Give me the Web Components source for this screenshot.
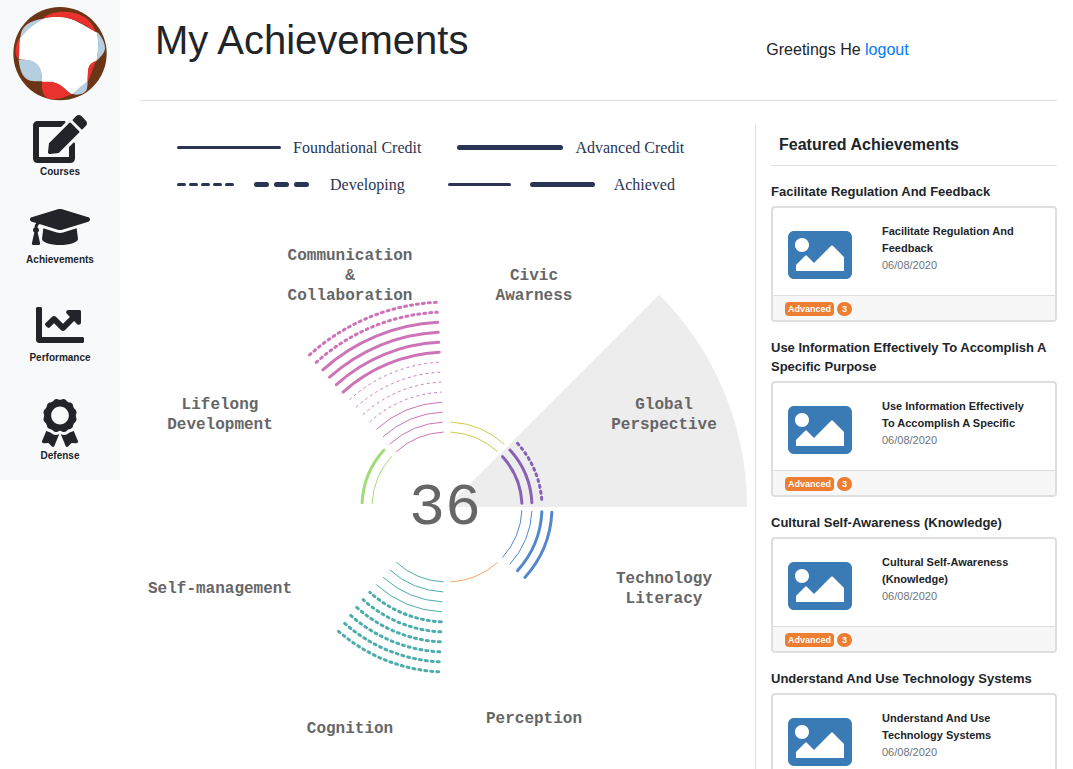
<!DOCTYPE html>
<html lang="en">
<head>
<meta charset="utf-8">
<title>My Achievements</title>
<style>
  body { margin: 0; background: #fff; color: #212529; font: 16px/24px "Liberation Sans", Arial, sans-serif; }
</style>
</head>
<body>
<achievements-app></achievements-app>

<script>
const ICONS = {
  edit: ['0 0 576 512', 'M402.6 83.2l90.2 90.2c3.8 3.8 3.8 10 0 13.8L274.4 405.6l-92.8 10.3c-12.4 1.4-22.9-9.1-21.5-21.5l10.3-92.8L388.8 83.2c3.8-3.8 10-3.8 13.8 0zm162-22.9l-48.8-48.8c-15.2-15.2-39.9-15.2-55.2 0l-35.4 35.4c-3.8 3.8-3.8 10 0 13.8l90.2 90.2c3.8 3.8 10 3.8 13.8 0l35.4-35.4c15.2-15.3 15.2-40 0-55.2zM384 346.2V448H64V128h229.8c3.2 0 6.2-1.3 8.5-3.5l40-40c7.6-7.6 2.2-20.5-8.5-20.5H48C21.5 64 0 85.5 0 112v352c0 26.5 21.5 48 48 48h352c26.5 0 48-21.5 48-48V306.2c0-10.7-12.9-16-20.5-8.5l-40 40c-2.2 2.3-3.5 5.3-3.5 8.5z'],
  cap: ['0 0 640 512', 'M622.34 153.2L343.4 67.5c-15.2-4.67-31.6-4.67-46.79 0L17.66 153.2c-23.54 7.23-23.54 38.36 0 45.59l48.63 14.94c-10.67 13.19-17.23 29.28-17.88 46.9C38.78 266.15 32 276.11 32 288c0 10.78 5.68 19.85 13.86 25.65L20.33 428.53C18.11 438.52 25.71 448 35.94 448h56.11c10.24 0 17.84-9.48 15.62-19.47L82.14 313.65C90.32 307.85 96 298.78 96 288c0-11.57-6.47-21.25-15.66-26.87.76-15.02 8.44-28.3 20.69-36.72L296.6 284.5c9.06 2.78 26.44 6.25 46.79 0l278.95-85.7c23.55-7.24 23.55-38.36 0-45.6zM352.79 315.09c-28.53 8.76-52.84 3.92-65.59 0l-145.02-44.55L128 384c0 35.35 85.96 64 192 64s192-28.65 192-64l-14.18-113.47-145.03 44.56z'],
  chart: ['0 0 512 512', 'M496 384H64V80c0-8.84-7.16-16-16-16H16C7.16 64 0 71.16 0 80v336c0 17.67 14.33 32 32 32h464c8.84 0 16-7.16 16-16v-32c0-8.84-7.16-16-16-16zM464 96H345.94c-21.38 0-32.09 25.85-16.97 40.97l32.4 32.4L288 242.75l-73.37-73.37c-12.5-12.5-32.76-12.5-45.25 0l-68.69 68.69c-6.25 6.25-6.25 16.38 0 22.63l22.62 22.62c6.25 6.25 16.38 6.25 22.63 0L192 237.25l73.37 73.37c12.5 12.5 32.76 12.5 45.25 0l96-96 32.4 32.4c15.12 15.12 40.97 4.41 40.97-16.97V112c.01-8.84-7.15-16-15.99-16z'],
  award: ['0 0 384 512', 'M97.12 362.63c-8.69-8.69-4.16-6.24-25.12-11.85-9.51-2.55-17.87-7.45-25.43-13.32L1.2 448.7c-4.39 10.77 3.81 22.47 15.43 22.03l52.69-2.01L105.56 507c8 8.44 22.04 5.81 26.43-4.96l52.05-127.62c-10.84 6.04-22.87 9.58-35.31 9.58-19.5 0-37.82-7.59-51.61-21.37zM382.8 448.7l-45.37-111.24c-7.56 5.88-15.92 10.77-25.43 13.32-21.07 5.64-16.45 3.18-25.12 11.85-13.79 13.78-32.12 21.37-51.62 21.37-12.44 0-24.47-3.55-35.31-9.58L252 502.04c4.39 10.77 18.44 13.4 26.43 4.96l36.25-38.28 52.69 2.01c11.62.44 19.82-11.27 15.43-22.03zM263 340c15.28-15.55 17.03-14.21 38.79-20.14 13.89-3.79 24.75-14.84 28.47-28.98 7.48-28.4 5.54-24.97 25.95-45.75 10.17-10.35 14.14-25.44 10.42-39.58-7.47-28.38-7.48-24.42 0-52.83 3.72-14.14-.25-29.23-10.42-39.58-20.41-20.78-18.47-17.36-25.95-45.75-3.72-14.14-14.58-25.19-28.47-28.98-27.88-7.61-24.52-5.62-44.95-26.41-10.17-10.35-25-14.4-38.89-10.61-27.87 7.6-23.98 7.61-51.9 0-13.89-3.79-28.72.25-38.89 10.61-20.41 20.78-17.05 18.8-44.94 26.41-13.89 3.79-24.75 14.84-28.47 28.98-7.47 28.39-5.54 24.97-25.95 45.75-10.17 10.35-14.15 25.44-10.42 39.58 7.47 28.36 7.48 24.4 0 52.82-3.72 14.14.25 29.23 10.42 39.59 20.41 20.78 18.47 17.35 25.95 45.75 3.72 14.14 14.58 25.19 28.47 28.98C104.6 325.96 106.27 325 121 340c13.23 13.47 33.84 15.88 49.74 5.82a39.676 39.676 0 0 1 42.53 0c15.89 10.06 36.5 7.65 49.73-5.82zM97.66 175.96c0-53.03 42.24-96.02 94.34-96.02s94.34 42.99 94.34 96.02-42.24 96.02-94.34 96.02-94.34-42.99-94.34-96.02z'],
  image: ['0 0 512 512', 'M464 448H48c-26.51 0-48-21.49-48-48V112c0-26.51 21.49-48 48-48h416c26.51 0 48 21.49 48 48v288c0 26.51-21.49 48-48 48zM112 120c-30.928 0-56 25.072-56 56s25.072 56 56 56 56-25.072 56-56-25.072-56-56-56zM64 384h384V272l-87.515-87.515c-4.686-4.686-12.284-4.686-16.971 0L208 320l-55.515-55.515c-4.686-4.686-12.284-4.686-16.971 0L64 336v48z']
};
const icon = name => `<svg viewBox="${ICONS[name][0]}" fill="currentColor" aria-hidden="true"><path d="${ICONS[name][1]}"/></svg>`;

function define(name, render) {
  customElements.define(name, class extends HTMLElement {
    connectedCallback() {
      if (this.shadowRoot) return;
      this.attachShadow({ mode: 'open' }).innerHTML = render(this);
    }
  });
}

define('site-logo', () => `
  <style>:host { display: block; width: 94px; height: 94px; } svg { display: block; width: 100%; height: 100%; }</style>
  <svg viewBox="39 21 282 282" role="img" aria-label="Logo">
    <circle cx="180" cy="161" r="140" fill="#6b3615"/>
    <path fill="#fff" d="M125 58C150 48 190 48 215 58C245 70 275 90 292 98C294 110 295 130 294 155L290 182C275 190 268 192 266 205C262 220 266 235 262 245C255 260 228 272 218 282L213 282C195 270 180 248 150 246L126 245C126 215 120 190 90 182C75 178 65 180 56 178C58 150 55 120 62 110C75 90 100 75 125 58Z"/>
    <path fill="#b5cee0" d="M62 106C66 75 90 62 130 56C110 66 85 85 62 113Z"/>
    <path fill="#e9312d" d="M130 54C150 35 200 30 235 42C262 52 280 72 288 97C265 82 225 52 180 51C160 50 145 51 130 54Z"/>
    <path fill="#b5cee0" d="M292 96C305 110 316 130 315 147C312 162 300 172 290 182C294 150 296 125 292 96Z"/>
    <path fill="#e9312d" d="M61 111C50 125 45 145 47 160C48 170 54 177 56 177C60 150 56 125 61 111Z"/>
    <path fill="#b5cee0" d="M56 180C60 215 70 243 103 244L126 244C127 210 118 190 95 182C80 178 68 180 56 180Z"/>
    <path fill="#e9312d" d="M126 246C124 270 130 297 155 298C180 297 200 291 215 283C195 268 180 246 150 245Z"/>
    <path fill="#b5cee0" d="M218 282C235 287 252 282 260 270C262 260 264 250 262 243C252 252 238 262 218 282Z"/>
    <path fill="#e9312d" d="M289 182C272 188 264 200 264 215C262 230 262 240 264 243C273 230 277 205 289 182Z"/>
  </svg>`);

define('nav-item', el => `
  <style>
    :host { display: block; }
    a { display: flex; flex-direction: column; align-items: center; color: inherit; text-decoration: none; font-size: 10px; line-height: 18px; font-weight: bold; }
    svg { display: block; height: 48px; max-width: 60px; }
  </style>
  <a href="#${el.getAttribute('icon')}">${icon(el.getAttribute('icon'))}<slot></slot></a>`);

define('side-bar', () => `
  <style>
    :host { display: block; box-sizing: border-box; flex: 0 0 120px; min-height: 480px; padding-top: 7px; background: #f8f9fb; }
    site-logo { margin: 0 auto 14px; }
    nav { display: flex; flex-direction: column; gap: 32px; }
    .group { display: flex; flex-direction: column; gap: 22px; }
  </style>
  <site-logo></site-logo>
  <nav aria-label="Main">
    <div class="group">
      <nav-item icon="edit">Courses</nav-item>
      <nav-item icon="cap">Achievements</nav-item>
    </div>
    <nav-item icon="chart">Performance</nav-item>
    <nav-item icon="award">Defense</nav-item>
  </nav>`);

define('page-header', () => `
  <style>
    :host { display: grid; grid-template-columns: 2fr 1fr; box-sizing: border-box; height: 101px; border-bottom: 1px solid #dee2e6; }
    h1 { margin: 16px 0 0; padding: 0 15px; font-size: 40px; line-height: 48px; font-weight: normal; }
    p { margin: 38px 0 0; padding: 0 15px; }
    a { color: #007bff; text-decoration: none; }
  </style>
  <h1>My Achievements</h1>
  <p>Greetings He <a href="#logout">logout</a></p>`);

define('line-sample', el => {
  const w = +el.getAttribute('length'), t = +el.getAttribute('weight'), dash = el.getAttribute('dash') || 'none';
  return `
  <style>:host { display: block; } svg { display: block; }</style>
  <svg width="${w}" height="8" aria-hidden="true"><path d="M${t / 2} 3.5H${w - t / 2}" stroke="#2a3555" stroke-width="${t}" stroke-linecap="round" stroke-dasharray="${dash}"/></svg>`;
});

define('credit-legend', () => `
  <style>
    :host { display: flex; flex-direction: column; gap: 13px; padding: 11px 0 0 37px; color: #2a3555; font-family: "Liberation Serif", "Times New Roman", serif; }
    .row, .item { display: flex; align-items: center; white-space: nowrap; }
    .row { gap: 36px; }
    .row.states { gap: 43px; }
    .item { gap: 12px; }
    .states .item { gap: 19px; }
  </style>
  <div class="row">
    <div class="item"><line-sample length="104" weight="3"></line-sample>Foundational Credit</div>
    <div class="item"><line-sample length="106" weight="5"></line-sample>Advanced Credit</div>
  </div>
  <div class="row states">
    <div class="item"><line-sample length="58" weight="3" dash="6 6"></line-sample><line-sample length="57" weight="5" dash="10 10"></line-sample>Developing</div>
    <div class="item"><line-sample length="63" weight="3"></line-sample><line-sample length="65" weight="5"></line-sample>Achieved</div>
  </div>`);

/* One entry per octant, clockwise from twelve o'clock; rings run outwards.
   s = thin solid, d = thin dashed, S = thick solid, D = thick dashed */
const SECTORS = [
  { color: '#d2ca4c', rings: 'ss', x: 394, y: 73, label: ['Civic', 'Awarness'] },
  { color: '#8860b5', rings: 'SSD', x: 524, y: 202, label: ['Global', 'Perspective'], active: true },
  { color: '#5387cd', rings: 'ssSS', x: 524, y: 376, label: ['Technology', 'Literacy'] },
  { color: '#f3a765', rings: 's', x: 394, y: 516, label: ['Perception'] },
  { color: '#4cadad', rings: 'ssssDDDDDD', x: 210, y: 526, label: ['Cognition'] },
  { color: '#4cadad', rings: '', x: 80, y: 386, label: ['Self-management'] },
  { color: '#a0dc7a', rings: 'sS', x: 80, y: 202, label: ['Lifelong', 'Development'] },
  { color: '#cd74b9', rings: 'ssssddddSSSSDD', x: 210, y: 53, label: ['Communication', '&amp;', 'Collaboration'] }
];

define('achievement-wheel', () => {
  const cx = 307, cy = 300, pad = 0.05;
  const at = (r, a) => `${(cx + r * Math.sin(a)).toFixed(2)} ${(cy - r * Math.cos(a)).toFixed(2)}`;
  let wedge = '', arcs = '', labels = '';
  SECTORS.forEach((s, i) => {
    const a0 = i * Math.PI / 4, a1 = a0 + Math.PI / 4;
    if (s.active) wedge += `<path fill="#ededed" d="M${cx} ${cy}L${at(300, a0)}A300 300 0 0 1 ${at(300, a1)}Z"/>`;
    [...s.rings].forEach((k, n) => {
      const r = 75 + n * 10;
      arcs += `<path class="${/[SD]/.test(k) ? 'thick' : 'thin'} ${/d/i.test(k) ? 'dashed' : ''}" stroke="${s.color}" d="M${at(r, a0 + pad)}A${r} ${r} 0 0 1 ${at(r, a1 - pad)}"/>`;
    });
    labels += `<text class="label">${s.label.map((t, n) => `<tspan x="${s.x}" y="${s.y + n * 20}">${t}</tspan>`).join('')}</text>`;
  });
  return `
  <style>
    :host { display: block; }
    svg { display: block; width: 100%; }
    .thin, .thick { fill: none; stroke-linecap: round; stroke-width: 1; }
    .thick { stroke-width: 3; }
    .dashed { stroke-dasharray: 2 4; }
    text { font-family: "Liberation Mono", "Courier New", monospace; fill: #666; text-anchor: middle; }
    .label { font-size: 16px; font-weight: bold; }
    .total { font-size: 60px; }
  </style>
  <svg viewBox="0 0 615 600">${wedge}<text class="total" x="305" y="317">36</text>${arcs}${labels}</svg>`;
});

define('achievement-card', el => `
  <style>
    :host { display: block; margin-bottom: 16px; }
    h3 { margin: 0 0 5px; font-size: 13px; line-height: 19px; font-weight: bold; }
    article { border: 2px solid #dedede; border-radius: 4px; overflow: hidden; }
    .body { display: flex; gap: 30px; padding: 15px 24px 8px 15px; }
    svg { display: block; flex: none; width: 64px; height: 64px; color: #3a7ab5; }
    .text { font-size: 11px; line-height: 17px; }
    strong { display: block; }
    time { color: #6c757d; }
    footer { display: flex; align-items: center; gap: 3px; padding: 6px 12px 4px; border-top: 1px solid #dedede; background: #f7f7f7; color: #fff; font-size: 9px; line-height: 14px; font-weight: bold; }
    footer span { padding: 0 3px; border-radius: 4px; background: #ed7d31; }
    footer .count { padding: 0 5px; border-radius: 7px; }
  </style>
  <h3>${el.getAttribute('heading')}</h3>
  <article>
    <div class="body">${icon('image')}<div class="text"><strong><slot></slot></strong><time datetime="2020-06-08">06/08/2020</time></div></div>
    <footer><span>Advanced</span><span class="count">3</span></footer>
  </article>`);

define('featured-list', () => `
  <style>
    :host { display: block; box-sizing: border-box; flex: 0 0 302px; padding-left: 15px; border-left: 1px solid #dee2e6; }
    h2 { margin: 0 0 16px; padding: 8px 8px; border-bottom: 1px solid #dee2e6; font-size: 16px; line-height: 24px; }
  </style>
  <h2>Featured Achievements</h2>
  <achievement-card heading="Facilitate Regulation And Feedback">Facilitate Regulation And Feedback</achievement-card>
  <achievement-card heading="Use Information Effectively To Accomplish A Specific Purpose">Use Information Effectively To Accomplish A Specific</achievement-card>
  <achievement-card heading="Cultural Self-Awareness (Knowledge)">Cultural Self-Awareness (Knowledge)</achievement-card>
  <achievement-card heading="Understand And Use Technology Systems">Understand And Use Technology Systems</achievement-card>`);

define('achievements-app', () => `
  <style>
    :host { display: flex; align-items: flex-start; }
    main { flex: 1; min-width: 0; padding: 0 16px 0 20px; }
    .content { display: flex; padding-top: 24px; }
    .overview { flex: 1; min-width: 0; }
    achievement-wheel { margin-top: 10px; }
  </style>
  <side-bar></side-bar>
  <main>
    <page-header></page-header>
    <div class="content">
      <section class="overview"><credit-legend></credit-legend><achievement-wheel></achievement-wheel></section>
      <featured-list></featured-list>
    </div>
  </main>`);
</script>
</body>
</html>
